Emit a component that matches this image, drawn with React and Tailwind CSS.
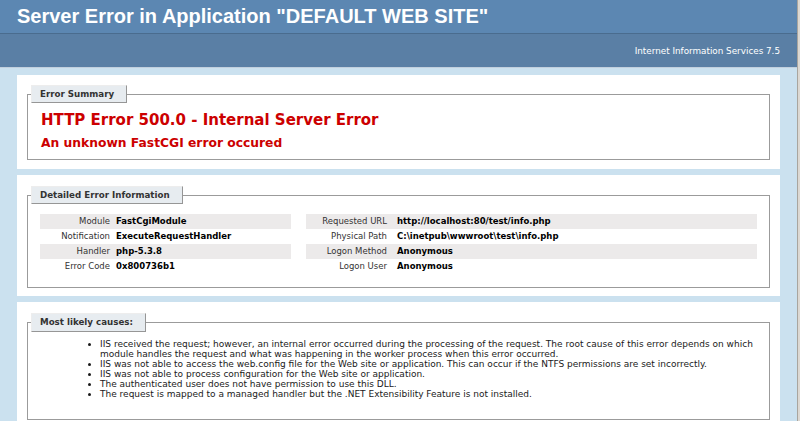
// App.jsx
import React from 'react';

const leftRows = [
  { label: 'Module', value: 'FastCgiModule' },
  { label: 'Notification', value: 'ExecuteRequestHandler' },
  { label: 'Handler', value: 'php-5.3.8' },
  { label: 'Error Code', value: '0x800736b1' },
];

const rightRows = [
  { label: 'Requested URL', value: 'http://localhost:80/test/info.php' },
  { label: 'Physical Path', value: 'C:\\inetpub\\wwwroot\\test\\info.php' },
  { label: 'Logon Method', value: 'Anonymous' },
  { label: 'Logon User', value: 'Anonymous' },
];

const causes = [
  'IIS received the request; however, an internal error occurred during the processing of the request. The root cause of this error depends on which module handles the request and what was happening in the worker process when this error occurred.',
  'IIS was not able to access the web.config file for the Web site or application. This can occur if the NTFS permissions are set incorrectly.',
  'IIS was not able to process configuration for the Web site or application.',
  'The authenticated user does not have permission to use this DLL.',
  'The request is mapped to a managed handler but the .NET Extensibility Feature is not installed.',
];

function Legend({ children, className = '' }) {
  return (
    <legend
      className={`bg-[#E7ECF0] border-t border-l border-[#EDEDED] border-r-[#969696] border-b-[#969696] border-r border-b pl-[8px] pr-[12px] py-[3px] text-[8.7px] font-bold text-[#333] ${className}`}
    >
      {children}
    </legend>
  );
}

function DetailTable({ rows, labelWidth }) {
  return (
    <div className="flex flex-col">
      {rows.map((row, i) => (
        <div
          key={row.label}
          className={`flex h-[15px] items-center leading-[15px] ${i % 2 === 0 ? 'bg-[#ECEAEA]' : ''}`}
        >
          <span className={`${labelWidth} shrink-0 text-right text-[#333]`}>{row.label}</span>
          <span className="font-bold text-black whitespace-nowrap">{row.value}</span>
        </div>
      ))}
    </div>
  );
}

export default function App() {
  return (
    <div className="flex h-[421px] w-[800px] overflow-hidden bg-[#CBE1EF] font-['DejaVu_Sans',Verdana,sans-serif] text-[8.5px] text-black">
      <div className="w-[797px] shrink-0">
        {/* Header */}
        <div className="h-[33px] bg-[#5C87B2] pl-[17px]">
          <h1 className="font-['Liberation_Sans',Arial,sans-serif] text-[20px] font-bold leading-[33px] text-white whitespace-nowrap">
            Server Error in Application "DEFAULT WEB SITE"
          </h1>
        </div>
        <div className="h-[35px] border-t border-b border-t-[#4A6C8E] border-b-[#C1CFDD] bg-[#5A7FA5] pr-[17px] pt-[11px] text-right text-[8.8px] leading-[12px] text-white">
          Internet Information Services 7.5
        </div>

        <div className="ml-[17px] w-[763px]">
          {/* Error Summary */}
          <div className="mt-[7px] bg-white px-[10px] pt-[10px] pb-[9px]">
            <fieldset className="border border-[#9b9b9b] pl-[13px] pr-[12px] pb-[8px]">
              <Legend className="-ml-[10px] leading-[10px]">Error Summary</Legend>
              <h2 className="mt-[8px] text-[15px] font-bold leading-[18px] text-[#CC0000]">
                HTTP Error 500.0 - Internal Server Error
              </h2>
              <h3 className="mt-[6px] text-[12.3px] font-bold leading-[16px] text-[#CC0000]">
                An unknown FastCGI error occured
              </h3>
            </fieldset>
          </div>

          {/* Detailed Error Information */}
          <div className="mt-[6px] bg-white px-[10px] pt-[11px] pb-[8px]">
            <fieldset className="border border-[#9b9b9b] px-[12px] pb-[13px]">
              <Legend className="-ml-[9px] leading-[10px]">Detailed Error Information</Legend>
              <div className="mt-[10px] flex gap-[15px]">
                <div className="w-[251px]">
                  <DetailTable rows={leftRows} labelWidth="w-[76px] pr-[6px]" />
                </div>
                <div className="w-[451px]">
                  <DetailTable rows={rightRows} labelWidth="w-[91px] pr-[10px]" />
                </div>
              </div>
            </fieldset>
          </div>

          {/* Most likely causes */}
          <div className="mt-[6px] bg-white px-[10px] pt-[11px] pb-[8px]">
            <fieldset className="border border-[#9b9b9b] px-[12px] pb-[20px]">
              <Legend className="-ml-[9px] leading-[11px]">Most likely causes:</Legend>
              <ul className="mt-[7px] ml-[60px] list-disc text-[9px] leading-[10px] text-[#1a1a1a]">
                {causes.map((c) => (
                  <li key={c}>{c}</li>
                ))}
              </ul>
            </fieldset>
          </div>
        </div>
      </div>
      {/* window scrollbar edge */}
      <div className="w-[3px] shrink-0 border-l border-[#a9a59e] bg-[#dcd8d2]" />
    </div>
  );
}
